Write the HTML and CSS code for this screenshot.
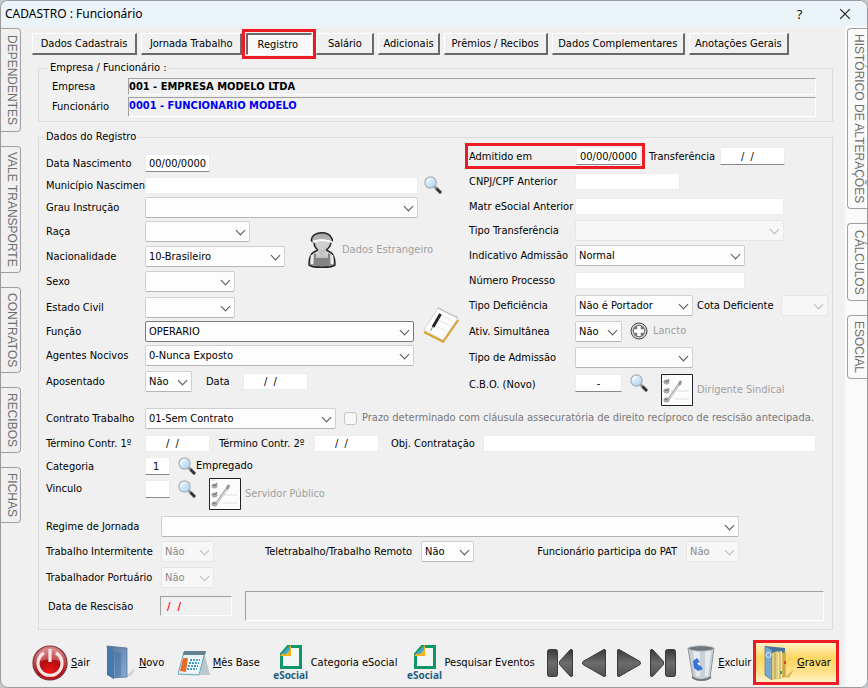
FILE: index.html
```html
<!DOCTYPE html>
<html lang="pt-BR">
<head>
<meta charset="utf-8">
<title>CADASTRO : Funcionário</title>
<link rel="stylesheet" href="styles.css">
</head>
<body>
<svg class="defs" aria-hidden="true">
  <defs>
    <linearGradient id="gGlass" x1="0" y1="0" x2="1" y2="1"><stop offset="0" stop-color="#f4faff"/><stop offset="1" stop-color="#a9d2f3"/></linearGradient>
    <linearGradient id="gDark" x1="0" y1="0" x2="0" y2="1"><stop offset="0" stop-color="#383838"/><stop offset="0.5" stop-color="#6c6c6c"/><stop offset="1" stop-color="#505050"/></linearGradient>
    <radialGradient id="gRed" cx="0.5" cy="0.75" r="0.75"><stop offset="0" stop-color="#f01818"/><stop offset="0.45" stop-color="#b00d12"/><stop offset="1" stop-color="#d98a8c"/></radialGradient>
    <linearGradient id="gGrey" x1="0" y1="0" x2="0" y2="1"><stop offset="0" stop-color="#a4a4a4"/><stop offset="0.6" stop-color="#d4d4d4"/><stop offset="1" stop-color="#8c8c8c"/></linearGradient>
    <linearGradient id="gBlue" x1="0" y1="0" x2="1" y2="1"><stop offset="0" stop-color="#54718f"/><stop offset="0.5" stop-color="#6d90ba"/><stop offset="1" stop-color="#89add8"/></linearGradient>
    <symbol id="lens" viewBox="0 0 18 18"><path d="M11 11l6 6" stroke="#ccc" stroke-width="4"/><path d="M10 10l3 3" stroke="#888" stroke-width="2"/><path d="M12.500 12.500l4.500 4.500" stroke="#333" stroke-width="2.600"/><circle cx="6.500" cy="6.500" r="5.600" fill="url(#gGlass)" stroke="#a9b0b8" stroke-width="1.200"/><path d="M3 6a4 4 0 0 1 4-3" stroke="#fff" fill="none"/></symbol>
    <symbol id="checklist" viewBox="0 0 32 32"><path d="M.5.500h31v31h-31z" fill="#fcfcfc" stroke="#222"/><path d="M2 2h4M10 17h18M14 25h14" stroke="#ddd"/><g fill="#bbb" stroke="#999"><ellipse cx="5.500" cy="8" rx="2.600" ry="2"/><ellipse cx="5.500" cy="17" rx="2.600" ry="2"/><ellipse cx="5.500" cy="26" rx="2.600" ry="2"/></g><path d="M4 7l2 1 2-3M4 16l2 1 2-3M4 25l2 1 2-3" stroke="#666" fill="none"/><path d="M7 26L19 9" stroke="#aaa" stroke-width="2.500"/><path d="M8 25L19 10" stroke="#eee"/><path d="M18.500 10l1-2" stroke="#999" stroke-width="3" stroke-linecap="round"/></symbol>
    <symbol id="sheet" viewBox="0 0 22 24"><path d="M8 1.500h12.500v21H1.500V9z" fill="#f2f6f4" stroke="#109767" stroke-width="3"/><path d="M0 11L11 0v11z" fill="#fbb216"/><path d="M2 9l8-8v4L6 9z" fill="#35a8e0"/></symbol>
  </defs>
</svg>
<div class="window">
  <header class="titlebar">
    <h1>CADASTRO : Funcionário</h1>
    <button class="cap" type="button" aria-label="Ajuda">?</button>
    <button class="cap" type="button" aria-label="Fechar"><svg width="10" height="10" viewBox="0 0 10 10"><path d="M0 0l10 10M10 0L0 10" stroke="#222" stroke-width="1.200"/></svg></button>
  </header>
  <div class="body">
    <nav class="side left">
      <button type="button" class="s1">DEPENDENTES</button>
      <button type="button" class="s2">VALE TRANSPORTE</button>
      <button type="button" class="s3">CONTRATOS</button>
      <button type="button" class="s4">RECIBOS</button>
      <button type="button" class="s5">FICHAS</button>
    </nav>
    <main>
      <nav class="tabs">
        <button type="button">Dados Cadastrais</button>
        <button type="button">Jornada Trabalho</button>
        <button type="button" class="active">Registro</button>
        <button type="button">Salário</button>
        <button type="button">Adicionais</button>
        <button type="button">Prêmios / Recibos</button>
        <button type="button">Dados Complementares</button>
        <button type="button">Anotações Gerais</button>
      </nav>

      <fieldset class="company">
        <legend>Empresa / Funcionário :</legend>
        <span>Empresa</span><output class="sunken">001 - EMPRESA MODELO LTDA</output>
        <span>Funcionário</span><output class="sunken blue">0001 - FUNCIONARIO MODELO</output>
      </fieldset>

      <fieldset class="record">
        <legend>Dados do Registro</legend>
        <div class="columns">
          <div class="col-left">
            <label for="nasc">Data Nascimento</label>
            <div class="f"><input id="nasc" class="line w64" value="00/00/0000"></div>
            <label for="mun">Município Nascimen</label>
            <div class="f wide"><input id="mun" class="flat"></div>
            <button type="button" class="ico mun-find" aria-label="Buscar município"><svg width="18" height="18"><use href="#lens"/></svg></button>
            <label for="grau">Grau Instrução</label>
            <div class="f wide"><span class="select"><select id="grau"><option></option></select></span></div>
            <label for="raca">Raça</label>
            <div class="f"><span class="select w105"><select id="raca"><option></option></select></span></div>
            <label for="nac">Nacionalidade</label>
            <div class="f"><span class="select w140"><select id="nac"><option>10-Brasileiro</option></select></span></div>
            <button type="button" class="ico foreign" disabled>
              <svg width="28" height="36" viewBox="0 0 28 36"><path d="M1 33c0-6 1-11 5-13l4-2c-3-2-4-5-4-8-2-.500-3-1-2.500-2.500C4 3 9 .7 13.500.7S22 2 23.500 6c1.500 2 1 3-.500 4 0 3-2 6-5 8l4 2c4 2 5 7 5 13-2 3-24 3-26 0z" fill="url(#gGrey)" stroke="#222" stroke-width="1.400"/><path d="M8 10c5-1 9-1 13 0-1 5-3 7-7 7s-6-2-6-7z" fill="#cfcfcf"/><path d="M10 17h8v4l-4 3-4-3z" fill="#c4c4c4"/><path d="M4 9c7-2.500 12-2.500 20 0v2c-7-2.200-13-2.200-18 0z" fill="#fff"/><path d="M8 21v5h12v-5l2 1v11c-4 1.500-12 1.500-16 0V22z" fill="#848484"/><path d="M4 23v9M24 23v9" stroke="#eee" stroke-width="2.500"/></svg>
              Dados Estrangeiro</button>
            <label for="sexo">Sexo</label>
            <div class="f"><span class="select w90"><select id="sexo"><option></option></select></span></div>
            <label for="civil">Estado Civil</label>
            <div class="f"><span class="select w90"><select id="civil"><option></option></select></span></div>
            <label for="func">Função</label>
            <div class="f wide inset"><span class="select strong"><select id="func"><option>OPERARIO</option></select></span></div>
            <button type="button" class="ico note" aria-label="Editar função"><svg width="36" height="36" viewBox="0 0 36 36"><path d="M1 25l19 9.500L35 13" fill="none" stroke="#d5a52e" stroke-width="2.500"/><path d="M15 1l20 10-15 22L.8 23z" fill="#fbfbfb" stroke="#ccc" stroke-width=".8"/><path d="M15 1l20 10" stroke="#aaa" stroke-width="1.500" stroke-dasharray="1 1"/><path d="M15 6l15 8M12 11l15 8M9 17l14 7" stroke="#e8e8e8"/><path d="M17.500 7L10 20" stroke="#222" stroke-width="2.800"/><path d="M9.500 20l-2 4" stroke="#888"/></svg></button>
            <label for="agentes">Agentes Nocivos</label>
            <div class="f wide inset"><span class="select"><select id="agentes"><option>0-Nunca Exposto</option></select></span></div>
            <label for="apos">Aposentado</label>
            <div class="f wide"><span class="select w48"><select id="apos"><option>Não</option></select></span><label class="when" for="aposdata">Data</label><input id="aposdata" class="flat date w64 fixed" value="/  /"></div>
          </div>

          <div class="col-right">
            <div class="row marked">
              <label for="adm">Admitido em</label><input id="adm" class="line w64" value="00/00/0000">
            </div>
            <div class="transfer"><label for="transf">Transferência</label><input id="transf" class="line date w64" value="/  /"></div>
            <label for="cnpj">CNPJ/CPF Anterior</label>
            <div class="f"><input id="cnpj" class="flat w105"></div>
            <label for="matr">Matr eSocial Anterior</label>
            <div class="f"><input id="matr" class="flat w208"></div>
            <label for="ttransf">Tipo Transferência</label>
            <div class="f"><span class="select w208 off"><select id="ttransf" disabled><option></option></select></span></div>
            <label for="indic">Indicativo Admissão</label>
            <div class="f"><span class="select w170"><select id="indic"><option>Normal</option></select></span></div>
            <label for="proc">Número Processo</label>
            <div class="f"><input id="proc" class="flat w170"></div>
            <label for="defic">Tipo Deficiência</label>
            <div class="f"><span class="select w118"><select id="defic"><option>Não é Portador</option></select></span><label class="gap4" for="cota">Cota Deficiente</label><span class="select w48 off push"><select id="cota" disabled><option></option></select></span></div>
            <label for="ativ">Ativ. Simultânea</label>
            <div class="f"><span class="select w48"><select id="ativ"><option>Não</option></select></span>
              <button type="button" class="ico add" disabled><svg width="18" height="18" viewBox="0 0 18 18"><circle cx="9" cy="9" r="8" fill="#ddd" stroke="#444"/><circle cx="9" cy="9" r="6.300" fill="#777"/><path d="M9 4v10M4 9h10" stroke="#fff" stroke-width="3.500"/></svg>Lancto</button></div>
            <label for="tadm">Tipo de Admissão</label>
            <div class="f"><span class="select w118"><select id="tadm"><option></option></select></span></div>
            <label class="top" for="cbo">C.B.O. (Novo)</label>
            <div class="f top"><input id="cbo" class="line w48 dash" value="-">
              <button type="button" class="ico gap8" aria-label="Buscar CBO"><svg width="18" height="18"><use href="#lens"/></svg></button>
              <button type="button" class="ico list" disabled><svg width="32" height="32"><use href="#checklist"/></svg>Dirigente Sindical</button></div>
          </div>
        </div>

        <div class="row h24 first">
          <label class="lb" for="contr">Contrato Trabalho</label><span class="select w191"><select id="contr"><option>01-Sem Contrato</option></select></span>
          <input type="checkbox" id="prazo" disabled><label class="muted" for="prazo">Prazo determinado com cláusula assecuratória de direito recíproco de rescisão antecipada.</label>
        </div>
        <div class="row h26">
          <label class="lb" for="t1">Término Contr. 1º</label><input id="t1" class="flat date w64" value="/  /">
          <label class="lb2" for="t2">Término Contr. 2º</label><input id="t2" class="flat date w64" value="/  /">
          <label class="lb3" for="obj">Obj. Contratação</label><input id="obj" class="flat grow">
        </div>
        <div class="row h20">
          <label class="lb" for="cat">Categoria</label><input id="cat" class="line w25" value="1">
          <button type="button" class="ico gap8" aria-label="Buscar categoria"><svg width="18" height="18"><use href="#lens"/></svg></button><output>Empregado</output>
        </div>
        <div class="row h38">
          <label class="lb" for="vinc">Vinculo</label><input id="vinc" class="line w25">
          <button type="button" class="ico gap8" aria-label="Buscar vínculo"><svg width="18" height="18"><use href="#lens"/></svg></button>
          <button type="button" class="ico list" disabled><svg width="32" height="32"><use href="#checklist"/></svg>Servidor Público</button>
        </div>
        <div class="row h24 regime">
          <label class="lb4" for="regime">Regime de Jornada</label><span class="select grow"><select id="regime"><option></option></select></span>
        </div>
        <div class="h26 spread">
          <div class="row"><label class="lb4" for="inter">Trabalho Intermitente</label><span class="select w52 off"><select id="inter" disabled><option>Não</option></select></span></div>
          <div class="row"><label class="pr8" for="tele">Teletrabalho/Trabalho Remoto</label><span class="select w52"><select id="tele"><option>Não</option></select></span></div>
          <div class="row"><label class="pr8" for="pat">Funcionário participa do PAT</label><span class="select w52 off"><select id="pat" disabled><option>Não</option></select></span></div>
        </div>
        <div class="row h26">
          <label class="lb4" for="port">Trabalhador Portuário</label><span class="select w52 off"><select id="port" disabled><option>Não</option></select></span>
        </div>
        <div class="row h32">
          <label class="lb5" for="resc">Data de Rescisão</label><input id="resc" class="sunken red" readonly value="/  /"><output class="sunken reason"></output>
        </div>
      </fieldset>

      <footer class="toolbar">
        <button type="button"><svg width="36" height="36" viewBox="0 0 36 36"><circle cx="18" cy="18" r="17" fill="url(#gRed)" stroke="#7d3336" stroke-width="1.200"/><path d="M4 17a14 14 0 0 1 28 0c-8-3-20-3-28 0z" fill="#fff" opacity=".22"/><path d="M12 8a12 12 0 1 0 12 0" fill="none" stroke="#f4e4e4" stroke-width="3.200"/><path d="M18 4v13" stroke="#f4e4e4" stroke-width="3.200"/></svg><span><u>S</u>air</span></button>
        <button type="button"><svg width="30" height="36" viewBox="0 0 30 36"><path d="M20 32l9-10-3 8z" fill="#d0d0d0"/><path d="M1 1l20 2v29L6 33z" fill="url(#gBlue)" stroke="#48698d" stroke-width=".7"/><path d="M1 1l7 5v28l-7-4z" fill="#4578ae"/><path d="M9 7l6 1v23l-6 2z" fill="#416d9d" opacity=".5"/></svg><span><u>N</u>ovo</span></button>
        <button type="button"><svg width="32" height="28" viewBox="0 0 32 28"><path d="M24 3l7 22h-5z" fill="#9fb0b8"/><path d="M6 3h20l6 23H22L25 8z" fill="#b9c8cd"/><path d="M6 3h21l-6 23L0 25z" fill="#e8f3f7" stroke="#61a2bd"/><path d="M6 2h22l-1 4H5z" fill="#62808f"/><path d="M5 9h18l-4 14-17-1z" fill="#fff"/><path d="M5 9h5L8 23l-6-1z" fill="#ef6a25"/><path d="M12 11h10M11 14h10M10 17h10M9 20h10" stroke="#3ba0d0" stroke-width="2" stroke-dasharray="2 1"/></svg><span><u>M</u>ês Base</span></button>
        <button type="button"><span class="es"><svg width="22" height="24"><use href="#sheet"/></svg><b>eSocial</b></span><span>Categoria eSocial</span></button>
        <button type="button"><span class="es"><svg width="22" height="24"><use href="#sheet"/></svg><b>eSocial</b></span><span>Pesquisar Eventos</span></button>
        <button type="button" aria-label="Primeiro"><svg width="26" height="28" viewBox="0 0 26 28"><g fill="url(#gDark)" stroke="#3a3a3a"><rect x=".5" y=".5" width="10" height="27" rx="2"/><path d="M25.500 2v24c0 2-1 2-2.500 1L12.500 15.500v-3L23 1c1.500-1 2.500-1 2.500 1z"/></g></svg></button>
        <button type="button" aria-label="Anterior"><svg width="24" height="28" viewBox="0 0 24 28"><path d="M23.500 2v24c0 2-1 2-2.500 1L1 15.500q-1-1.500 0-3L21 1c1.500-1 2.500-1 2.500 1z" fill="url(#gDark)" stroke="#3a3a3a"/></svg></button>
        <button type="button" aria-label="Próximo"><svg width="24" height="28" viewBox="0 0 24 28"><path d="M.5 2v24c0 2 1 2 2.500 1L23 15.500q1-1.500 0-3L3 1C1.500 0 .5 0 .5 2z" fill="url(#gDark)" stroke="#3a3a3a"/></svg></button>
        <button type="button" aria-label="Último"><svg width="26" height="28" viewBox="0 0 26 28"><g fill="url(#gDark)" stroke="#3a3a3a"><rect x="15.500" y=".5" width="10" height="27" rx="2"/><path d="M.5 2v24c0 2 1 2 2.500 1l10.500-11.500v-3L3 1C1.500 0 .5 0 .5 2z"/></g></svg></button>
        <button type="button"><svg width="28" height="36" viewBox="0 0 28 36"><path d="M1 3l5 30c4 3 12 3 17 0l4-30z" fill="#c9d0d8" stroke="#8b939c"/><path d="M6 6l3 25h4V6zM18 6v25h3l3-25z" fill="#eef1f5" opacity=".8"/><ellipse cx="14" cy="3.500" rx="13" ry="2.800" fill="#70767e" stroke="#c7cbd0"/><path d="M5 32c5 4 14 4 19 0" stroke="#777" fill="none" stroke-width="2"/><path d="M6 16l4-3 3 4-3 1 4 5-3 3-4-3zM13 20l3 4-5 2" fill="#3574d4"/></svg><span><u>E</u>xcluir</span></button>
        <button type="button" class="save"><svg width="30" height="36" viewBox="0 0 30 36"><path d="M21 32l9-8-5 9z" fill="#b58f2d" opacity=".5"/><path d="M1 1l20 2v26l-5 5-15-3z" fill="#47739c"/><path d="M1 1l7 4v30l-7-5z" fill="#78a9cf" stroke="#4a7699" stroke-width=".7"/><circle cx="4.500" cy="10" r="2.500" fill="none" stroke="#e7f0f8"/><path d="M8 8l6-2v28l-6 1z" fill="#e3cd7c"/><path d="M14 7l4-1v27l-4 1z" fill="#f6e7ab"/><path d="M18 8l4-1v25l-4 1z" fill="#d9b951"/><path d="M11 8v26M16 7v27M20 8v24" stroke="#b89b42"/><path d="M16 26h2v3h-2z" fill="#3ba45d"/><path d="M20 16h2v3h-2z" fill="#d6452c"/></svg><span><u>G</u>ravar</span></button>
      </footer>
    </main>
    <nav class="side right">
      <button type="button" class="s6">HISTÓRICO DE ALTERAÇÕES</button>
      <button type="button" class="s7">CÁLCULOS</button>
      <button type="button" class="s8">ESOCIAL</button>
    </nav>
  </div>
</div>
</body>
</html>
```
FILE: styles.css
```css
* { box-sizing: border-box; }
body {
  margin: 0;
  min-height: 100vh;
  display: flex;
  background: #c4c8ca;
  color: #000;
  font: 11px/14px "DejaVu Sans Condensed", "DejaVu Sans", sans-serif;
}
.defs { position: absolute; width: 0; height: 0; }
button, input, select { font: inherit; color: inherit; margin: 0; }
svg { display: block; flex: none; }
.window {
  flex: 1;
  display: flex;
  flex-direction: column;
  min-width: 0;
  border: 1px solid #9b9b9b;
  border-radius: 8px;
  overflow: hidden;
  background: #f0f0f0;
}

/* Title bar */
.titlebar { display: flex; align-items: center; height: 25px; background: #ebf4f9; padding-left: 4px; }
.titlebar h1 { flex: 1; margin: 0; font: 12px/16px "Noto Sans", sans-serif; }
.cap { width: 45px; height: 25px; border: 0; padding: 0; background: none; display: flex; align-items: center; justify-content: center; font: 13px/16px "Open Sans", sans-serif; }

/* Body and side tabs */
.body { flex: 1; display: flex; }
main { flex: 1; min-width: 0; padding: 7px 0 0 11px; }
.side { display: flex; flex-direction: column; gap: 14px; padding-top: 2px; }
.side button {
  writing-mode: vertical-rl;
  width: 20px;
  padding: 0 0 0 2px;
  border: 1px solid #a0a0a0;
  border-radius: 0 4px 4px 0;
  border-left: 0;
  background: #f0f0f0;
  color: #6e6e6e;
  font: 12px/16px "Liberation Sans", sans-serif;
}
.side.right { width: 22px; padding-left: 2px; background: #fafafa; }
.side.right button { border: 1px solid #a0a0a0; border-right: 0; border-radius: 4px 0 0 4px; background: #fafafa; }
.side .s1 { height: 104px; }
.side .s2 { height: 127px; }
.side .s3 { height: 86px; }
.side .s4 { height: 66px; }
.side .s5 { height: 56px; }
.side .s6 { height: 181px; }
.side .s7 { height: 78px; }
.side .s8 { height: 64px; }

/* Page tabs */
.tabs {
  display: grid;
  grid-template-columns: 105fr 101fr 66fr 58fr 61fr 104fr 133fr 100fr;
  column-gap: 4px;
  padding-right: 56px;
}
.tabs button {
  height: 22px;
  min-width: 0;
  padding: 0;
  white-space: nowrap;
  background: #f0f0f0;
  border: 1px solid #fff;
  border-right: 2px solid #696969;
  border-bottom: 2px solid #696969;
}
.tabs .active {
  background: #f8f8f8;
  border: 1px solid #fff;
  border-top: 2px solid #696969;
  border-left: 2px solid #696969;
  padding: 0 4px 0 0;
  outline: 3px solid #ed1c24;
  outline-offset: 1px;
}

/* Groups */
fieldset { margin: 0 12px 0 6px; min-width: 0; border: 1px solid #dcdcdc; }
legend { padding: 0 2px; line-height: 14px; }
.company {
  display: grid;
  grid-template-columns: 76px 1fr;
  row-gap: 2px;
  align-items: center;
  margin-top: 6px;
  padding: 3px 16px 4px 13px;
}
.company legend { margin-left: -4px; }
.sunken { border: 1px solid #fff; border-top-color: #a0a0a0; border-left-color: #a0a0a0; background: #f0f0f0; }
.company .sunken { height: 17px; font-weight: bold; line-height: 15px; }
.company .blue { height: 20px; color: #0000f0; }
.record { margin-top: 8px; padding: 0 16px 7px 7px; }
.record legend { margin-left: -2px; }

/* Fields */
label { padding-top: 2px; white-space: nowrap; }
input { min-width: 0; }
.flat, .line { height: 17px; border: 1px solid #ececec; background: #fff; padding: 0 3px; }
.line { height: 18px; border-bottom-color: #888; }
.date { padding-left: 20px; white-space: pre; }
.dash { text-align: center; }
.select { position: relative; display: block; height: 21px; flex: none; }
.select select {
  appearance: none;
  display: block;
  width: 100%;
  height: 100%;
  padding: 1px 0 0 3px;
  border: 1px solid #d0d0d0;
  border-bottom-color: #b4b4b4;
  border-radius: 2px;
  background: #fdfdfd;
  opacity: 1;
}
.select::after {
  content: "";
  position: absolute;
  right: 6px;
  top: 6px;
  width: 6px;
  height: 6px;
  border: solid #555;
  border-width: 0 1px 1px 0;
  transform: rotate(45deg);
  pointer-events: none;
}
.off select { background: #f7f7f7; border-color: #e6e6e6; color: #888; }
.off::after { border-color: #bbb; }
.strong select { border-color: #7a7a7a; }
.w25 { width: 25px; }
.w25.line { padding-left: 7px; }
.w48 { width: 47px; }
.w52 { width: 53px; }
.w64 { width: 65px; }
.w90 { width: 90px; }
.w105 { width: 105px; }
.w118 { width: 118px; }
.w140 { width: 140px; }
.w170 { width: 170px; }
.w191 { width: 191px; }
.w208 { width: 209px; }
.select.grow, .grow { flex: 1; }
.ico { display: flex; align-items: center; gap: 4px; padding: 0; border: 0; background: none; white-space: nowrap; }
.ico:disabled { color: #a0a0a0; }
.gap4 { margin-left: 4px; }
.gap8 { margin-left: 8px; }
.when { width: 51px; padding-left: 14px; }
.muted { color: #777; }

.columns { display: flex; }
.col-left {
  display: grid;
  flex: none;
  grid-template-columns: 99px 156px 117px 48px;
  grid-template-rows: 22px 22px 22px 26px 24px 26px 26px 22px 26px 26px;
  align-items: center;
  align-content: start;
  padding-top: 8px;
}
.col-left > label { grid-column: 1; }
.f { display: flex; align-items: center; }
.col-left .f { grid-column: 2; }
.col-left .wide { grid-column: 2 / 4; }
.col-left .inset { padding-right: 4px; }
.wide .flat:not(.fixed), .wide .select:not(.w48) { flex: 1; }
.mun-find { grid-area: 2 / 4; padding-left: 6px; }
.foreign { grid-area: 4 / 3 / 6 / 5; align-self: end; padding-left: 7px; gap: 6px; }
.note { grid-area: 7 / 4 / 10 / 5; padding-left: 5px; }
.note svg { margin-top: -12px; }
.col-right {
  flex: 1;
  display: grid;
  grid-template-columns: 106px 1fr;
  grid-template-rows: 24px 26px 24px 24px 26px 24px 26px 26px 26px 36px;
  align-items: center;
  padding-left: 3px;
}
.row { display: flex; align-items: center; }
.marked { grid-area: 1 / 1 / 2 / 3; width: 172px; justify-content: space-between; outline: 3px solid #ed1c24; outline-offset: 1px; height: 18px; }
.transfer { grid-area: 1 / 2 / 2 / 3; display: flex; align-items: center; justify-content: space-between; margin-left: 74px; width: 136px; }
.push { margin-left: auto; margin-right: -12px; }
.add { margin-left: 8px; gap: 5px; }
.col-right .top { align-self: start; align-items: flex-start; padding-top: 4px; }
.col-right label.top { padding-top: 8px; }
.list { margin-left: 13px; }

.first input { appearance: none; flex: none; width: 13px; height: 13px; margin-left: 8px; margin-right: 5px; border: 1px solid #c4c4c4; border-radius: 3px; background: #f8f8f8; }
.first .muted { padding-top: 0; }
.lb { width: 99px; flex: none; }
.lb2 { padding-left: 9px; width: 104px; }
.lb3 { padding-left: 12px; width: 104px; }
.lb4 { width: 115px; flex: none; }
.lb5 { width: 114px; flex: none; padding-left: 2px; }
.pr8 { padding-right: 9px; }
.h20 { height: 20px; }
.h24 { height: 24px; }
.h26 { height: 26px; }
.h32 { height: 32px; }
.h38 { height: 38px; align-items: flex-start; padding-top: 2px; }
.h38 .lb, .h38 .line, .h38 .gap8 { margin-top: 2px; }
.regime { margin-right: 77px; }
.spread { display: grid; grid-template-columns: 219px 1fr auto; margin-right: 77px; }
.red { width: 72px; height: 20px; margin-right: 13px; padding: 0 6px; color: #f00; font-weight: bold; white-space: pre; }
.reason { flex: 1; height: 30px; margin-right: -8px; }

/* Toolbar */
.toolbar {
  display: grid;
  grid-template-columns: 74fr 72fr 96fr 134fr 140fr 35fr 35fr 33fr 37fr 69fr 80fr;
  align-items: center;
  padding-right: 9px;
  margin-top: 13px;
}
.toolbar button { display: flex; align-items: center; gap: 3px; height: 39px; min-width: 0; padding: 0; border: 0; background: none; white-space: nowrap; }
.es { width: 34px; flex: none; display: flex; flex-direction: column; align-items: center; }
.es b { font: bold 10px/12px "Open Sans", sans-serif; color: #255e80; }
.toolbar .save {
  padding-left: 8px;
  background: linear-gradient(#fff2c4, #fed65f 40%, #fee18a 75%, #fff3c9);
  outline: 3px solid #ed1c24;
}
```
